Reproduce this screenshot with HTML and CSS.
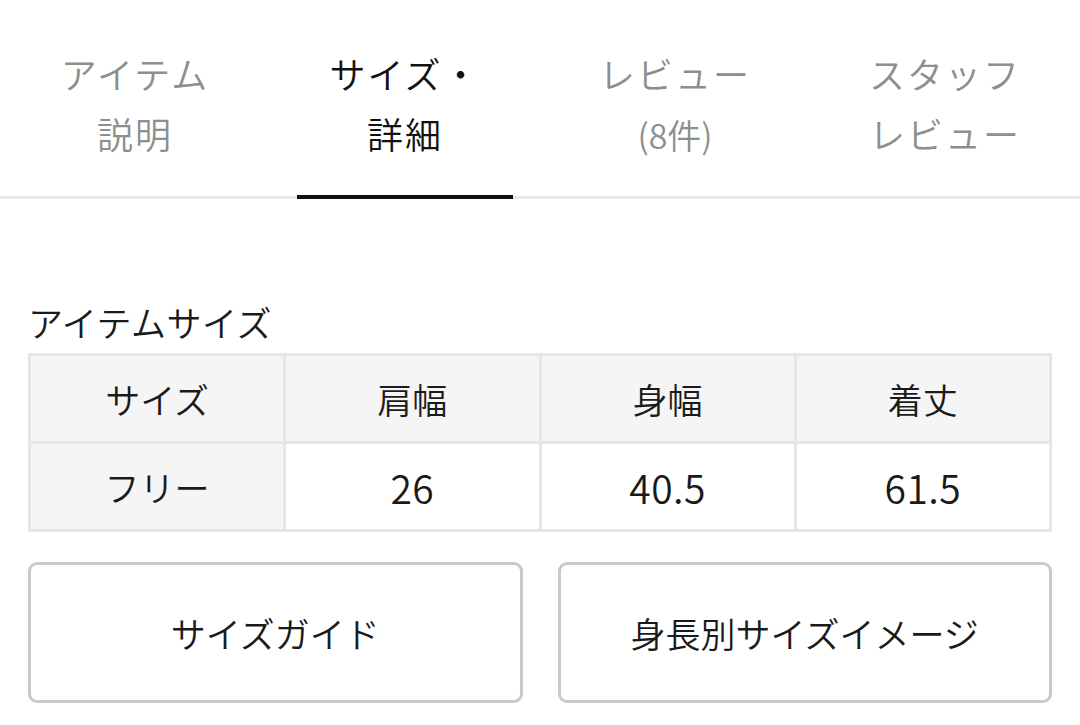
FILE: index.html
```html
<!DOCTYPE html>
<html lang="ja">
<head>
<meta charset="utf-8">
<title>サイズ・詳細</title>
<link rel="stylesheet" href="styles.css">
</head>
<body>
<nav class="tabs">
  <div class="tab"><span class="tab-label">アイテム<br>説明</span></div>
  <div class="tab active"><span class="tab-label">サイズ・<br>詳細</span></div>
  <div class="tab"><span class="tab-label">レビュー<br><span class="num">(8件)</span></span></div>
  <div class="tab"><span class="tab-label">スタッフ<br>レビュー</span></div>
</nav>
<main class="content">
  <h2 class="label">アイテムサイズ</h2>
  <table class="size-table">
    <tr>
      <th>サイズ</th>
      <th>肩幅</th>
      <th>身幅</th>
      <th>着丈</th>
    </tr>
    <tr>
      <th>フリー</th>
      <td>26</td>
      <td>40.5</td>
      <td>61.5</td>
    </tr>
  </table>
  <div class="buttons">
    <button class="btn">サイズガイド</button>
    <button class="btn">身長別サイズイメージ</button>
  </div>
</main>
</body>
</html>
```

FILE: styles.css
```css
html, body {
  margin: 0;
  padding: 0;
  background: #fff;
}
body {
  font-family: "Noto Sans CJK JP", "Noto Sans", sans-serif;
  font-weight: 350;
  color: #1a1a1a;
}
.tabs {
  display: flex;
  border-bottom: 3px solid #e8e8e8;
}
.tab {
  flex: 1;
  display: flex;
  justify-content: center;
  padding: 0 27px;
  margin-bottom: -3px;
  text-align: center;
  font-size: 36px;
  letter-spacing: 2px;
  line-height: 60px;
  color: #8e8e8e;
}
.tab-label {
  display: block;
  width: 100%;
  box-sizing: border-box;
  padding-top: 43px;
  height: 195px;
}
.tab .num {
  letter-spacing: 0;
  font-size: 34px;
}
.tab.active {
  color: #111;
}
.tab.active .tab-label {
  border-bottom: 4px solid #111;
  height: 199px;
}
.content {
  padding: 99px 28px 0;
}
.label {
  margin: 0 0 7px;
  font-size: 35px;
  font-weight: 350;
  letter-spacing: 0.5px;
  line-height: 48px;
  color: #1a1a1a;
}
.size-table {
  width: 100%;
  border-collapse: collapse;
  table-layout: fixed;
}
.size-table th,
.size-table td {
  border: 3px solid #e6e6e6;
  height: 85px;
  padding: 0;
  text-align: center;
  font-size: 35px;
  font-weight: 350;
  color: #1a1a1a;
}
.size-table th {
  background: #f5f5f5;
}
.size-table td {
  background: #fff;
  font-size: 39px;
  letter-spacing: 0.5px;
}
.buttons {
  display: flex;
  gap: 35px;
  margin-top: 30px;
}
.btn {
  flex: 1;
  height: 141px;
  background: #fff;
  border: 3px solid #c9c9c9;
  border-radius: 9px;
  font-family: inherit;
  font-weight: 350;
  font-size: 35px;
  color: #1a1a1a;
  padding: 0;
}
```
